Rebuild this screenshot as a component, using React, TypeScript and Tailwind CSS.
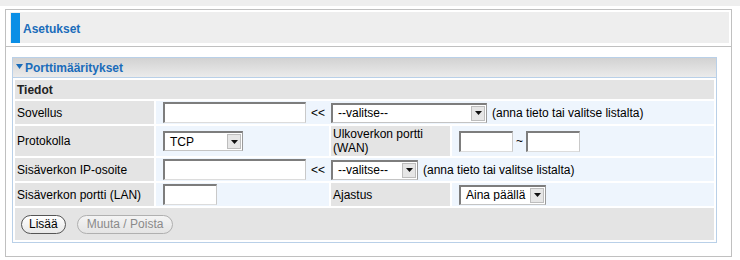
import React from 'react'

const font = { fontFamily: '"Liberation Sans", Arial, sans-serif' }

function TextBox({ w }: { w: string }) {
  return (
    <div className={`${w} h-[21px] bg-white border-t-2 border-l-2 border-r border-b border-t-[#7d7d7d] border-l-[#7d7d7d] border-r-[#c9c9c9] border-b-[#dcdcdc]`} />
  )
}

function Select({ w, value }: { w: string; value: string }) {
  return (
    <div className={`${w} h-[20px] bg-white flex items-center border-t-2 border-l-2 border-r border-b border-t-[#7d7d7d] border-l-[#7d7d7d] border-r-[#9a9a9a] border-b-[#c4c4c4]`}>
      <span className="flex-1 pl-[5px] text-[12px] text-black leading-none whitespace-nowrap overflow-hidden">{value}</span>
      <span className="w-[14px] h-[15px] mr-[1px] shrink-0 bg-[#e6e6e6] border border-[#bdbdbd] flex items-center justify-center">
        <svg width="7" height="4" viewBox="0 0 7 4"><path d="M0 0h7L3.5 4z" fill="#111" /></svg>
      </span>
    </div>
  )
}

export default function App() {
  return (
    <div className="w-[740px] h-[260px] bg-white text-[12px] text-black" style={font}>
      <div className="h-[6px] bg-[#eeeeee]" />
      <div className="pl-[5px] pt-[3px]">
        <div className="w-[727px] h-[248px] border border-[#c0c0c0]">
          <div className="pt-[2px] pl-[4px] pr-[2px]">
            <div className="h-[31px] bg-[#eeeeee] flex items-stretch">
              <div className="w-[9px] ml-[1px] mt-[1px] bg-[#0b8fe6]" />
              <span className="self-center ml-[3px] mt-[2px] font-bold text-[12px] text-[#1a6cba]">Asetukset</span>
            </div>
          </div>
          <div className="mt-[3px] h-px bg-[#c0c0c0]" />

          <div className="ml-[6px] mt-[10px] w-[705px] border border-[#b9d0e8]">
            <div className="h-[20px] bg-gradient-to-b from-[#d2d2d2] to-[#ebebeb] border-b border-[#b9d0e8] flex items-center pl-[3px]">
              <svg width="7" height="5" viewBox="0 0 7 5" className="mr-[2px] mb-[2px]"><path d="M0 0h7L3.5 5z" fill="#1a6cba" /></svg>
              <span className="font-bold text-[12px] text-[#1a6cba]">Porttimääritykset</span>
            </div>

            <div className="p-[2px] flex flex-col gap-[2px]">
              <div className="h-[19px] bg-[#e4e4e4] flex items-center pl-[2px] font-bold text-[#222]">Tiedot</div>

              <div className="grid grid-cols-[139px_173px_119px_1fr] gap-[2px]">
                <div className="h-[23px] bg-[#e4e4e4] flex items-center pl-[2px]">Sovellus</div>
                <div className="col-span-3 bg-[#eef5fd] flex items-center pl-[7px]">
                  <TextBox w="w-[143px]" />
                  <span className="ml-[5px] mr-[6px]">&lt;&lt;</span>
                  <Select w="w-[156px]" value="--valitse--" />
                  <span className="ml-[5px]">(anna tieto tai valitse listalta)</span>
                </div>

                <div className="h-[30px] bg-[#e4e4e4] flex items-center pl-[2px]">Protokolla</div>
                <div className="bg-[#eef5fd] flex items-center pl-[7px]">
                  <Select w="w-[80px]" value="TCP" />
                </div>
                <div className="bg-[#e4e4e4] flex items-center pl-[2px] leading-[14px]">Ulkoverkon portti<br />(WAN)</div>
                <div className="bg-[#eef5fd] flex items-center pl-[7px]">
                  <TextBox w="w-[54px]" />
                  <span className="mx-[3px]">~</span>
                  <TextBox w="w-[54px]" />
                </div>

                <div className="h-[23px] bg-[#e4e4e4] flex items-center pl-[2px]">Sisäverkon IP-osoite</div>
                <div className="col-span-3 bg-[#eef5fd] flex items-center pl-[7px]">
                  <TextBox w="w-[143px]" />
                  <span className="ml-[5px] mr-[6px]">&lt;&lt;</span>
                  <Select w="w-[87px]" value="--valitse--" />
                  <span className="ml-[5px]">(anna tieto tai valitse listalta)</span>
                </div>

                <div className="h-[23px] bg-[#e4e4e4] flex items-center pl-[2px]">Sisäverkon portti (LAN)</div>
                <div className="bg-[#eef5fd] flex items-center pl-[7px]">
                  <TextBox w="w-[54px]" />
                </div>
                <div className="bg-[#e4e4e4] flex items-center pl-[2px]">Ajastus</div>
                <div className="bg-[#eef5fd] flex items-center pl-[7px]">
                  <Select w="w-[87px]" value="Aina päällä" />
                </div>
              </div>

              <div className="h-[32px] bg-[#e4e4e4] flex items-center pl-[6px] gap-[11px]">
                <button className="h-[19px] px-[7px] rounded-full border border-[#555] bg-gradient-to-b from-white to-[#e8e8e8] text-[12px] text-black leading-none">Lisää</button>
                <button className="h-[19px] px-[9px] rounded-full border border-[#b0b0b0] bg-gradient-to-b from-[#f4f4f4] to-[#e4e4e4] text-[12px] text-[#8a8a8a] leading-none">Muuta / Poista</button>
              </div>
            </div>
          </div>
        </div>
      </div>
    </div>
  )
}
